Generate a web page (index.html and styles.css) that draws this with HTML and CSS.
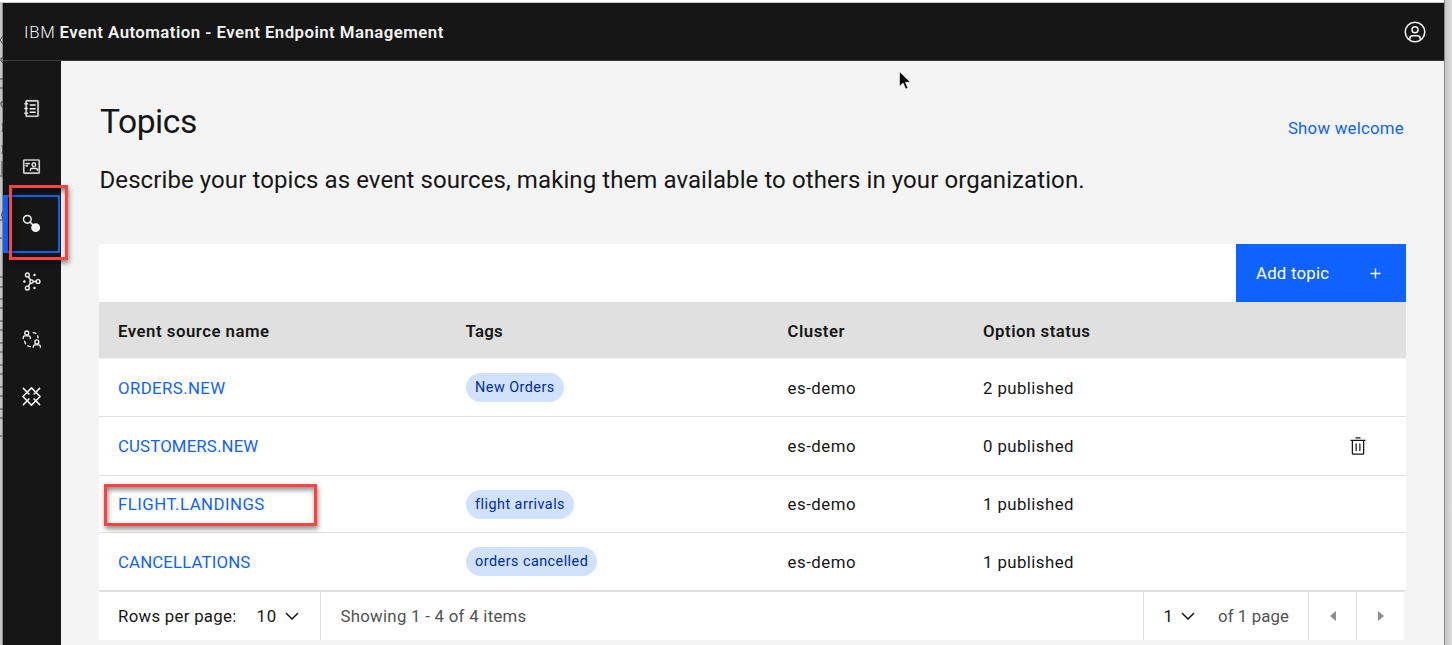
FILE: index.html
```html
<!DOCTYPE html>
<html lang="en">
<head>
<meta charset="utf-8">
<title>Event Endpoint Management</title>
<link rel="stylesheet" href="styles.css">
</head>
<body>
<svg class="edge" viewBox="0 0 3 450" fill="none" stroke="#444" stroke-width="1"><path d="M3 36 0 40l3 4M3 58H1v3l2 2M0 79h3M0 88h3M3 102H1v3l2 3M2 123q2 5 0 9M2 145q2 5 0 9M2 161v14M0 176h3M3 211q-3 4 0 8M0 220h3M0 238h2M0 277h3M0 287h3M0 299h3M0 308h3M0 321h3M0 330h3M0 343h3M0 352h3M0 365h3M0 374h3M0 387h3M0 396h3M0 409h3M0 418h3M0 436h2"/></svg>
<div class="window">
  <header class="header">
    <div class="brand"><span class="brand-prefix">IBM</span> <b class="brand-name">Event Automation - Event Endpoint Management</b></div>
    <svg class="user" viewBox="0 0 32 32" fill="currentColor"><path d="M16 8a5 5 0 1 0 5 5 5 5 0 0 0-5-5Zm0 8a3 3 0 1 1 3-3 3 3 0 0 1-3 3Z"/><path d="M16 2a14 14 0 1 0 14 14A14 14 0 0 0 16 2Zm-6 24.380V25a3 3 0 0 1 3-3h6a3 3 0 0 1 3 3v1.380a11.900 11.900 0 0 1-12 0Zm13.990-1.450A5 5 0 0 0 19 20h-6a5 5 0 0 0-4.990 4.930 12 12 0 1 1 15.980 0Z"/></svg>
  </header>
  <div class="body">
    <nav class="nav">
      <a class="nav-item"><svg class="icon" viewBox="0 0 32 32" fill="currentColor"><path d="M13 9h10v2.500H13zM13 15h10v2.500H13zM13 21h10v2.500H13z"/><path d="M26 2H8a2 2 0 0 0-2 2v3H4v2h2v6H4v2h2v6H4v2h2v3a2 2 0 0 0 2 2h18a2 2 0 0 0 2-2V4a2 2 0 0 0-2-2Zm0 26H8v-3h2v-2H8v-6h2v-2H8V9h2V7H8V4h18Z" stroke="currentColor" stroke-width=".5"/></svg></a>
      <a class="nav-item"><svg class="icon" viewBox="0 0 32 32" fill="currentColor" stroke="currentColor" stroke-width=".4"><path d="M28 4H4a2 2 0 0 0-2 2v20a2 2 0 0 0 2 2h24a2 2 0 0 0 2-2V6a2 2 0 0 0-2-2Zm0 22H4V6h24Z"/><path d="M6 10h7v2H6zM6 14h4v2H6z"/><path d="M20 9a4 4 0 1 0 0 8 4 4 0 0 0 0-8Zm0 6a2 2 0 1 1 0-4 2 2 0 0 1 0 4ZM15 23h-2v-1a4 4 0 0 1 4-4h6a4 4 0 0 1 4 4v1h-2v-1a2 2 0 0 0-2-2h-6a2 2 0 0 0-2 2Z"/></svg></a>
      <a class="nav-item nav-item-active"><svg class="icon" viewBox="0 0 32 32"><circle cx="9" cy="9" r="6.500" fill="none" stroke="currentColor" stroke-width="2.400"/><path d="m13 13 7 7" stroke="currentColor" stroke-width="2.400"/><circle cx="23" cy="23" r="7.500" fill="currentColor"/></svg></a>
      <a class="nav-item"><svg class="icon" viewBox="0 0 32 32" fill="none" stroke="currentColor" stroke-width="2.400"><circle cx="9" cy="5" r="3.200"/><circle cx="9" cy="27" r="3.200"/><circle cx="27" cy="16" r="3.200"/><circle cx="16" cy="16" r="2.800"/><path d="m10.500 8 4.200 5.800M10.500 24l4.200-5.800M19 16h5"/><g fill="currentColor" stroke="none"><circle cx="4" cy="16" r="2"/><circle cx="21" cy="5" r="2"/><circle cx="21" cy="27" r="2"/></g></svg></a>
      <a class="nav-item"><svg class="icon" viewBox="0 0 32 32" fill="none" stroke="currentColor" stroke-width="2.300"><circle cx="8" cy="5" r="3.300"/><path d="M2 15v-2a3 3 0 0 1 3-3h6a3 3 0 0 1 3 3v2"/><circle cx="25" cy="20" r="3.300"/><path d="M19 30v-2a3 3 0 0 1 3-3h6a3 3 0 0 1 3 3v2"/><path d="M18 4.500q4 0 6 2M26 9q1 2 1 5M4.500 18q0 4 2 6M9 26q2 2 6 2"/></svg></a>
      <a class="nav-item"><svg class="icon" viewBox="0 0 32 32" fill="none" stroke="currentColor" stroke-width="2.500"><path d="M16 1.500 30.500 16 16 30.500 1.500 16Z" stroke-linejoin="round"/><path d="m1.500 1.500 11 11M30.500 1.500l-11 11M1.500 30.500l11-11M30.500 30.500l-11-11"/></svg></a>
    </nav>
    <main class="main">
      <div class="title-row"><h1 class="title">Topics</h1><a class="link welcome">Show welcome</a></div>
      <p class="intro">Describe your topics as event sources, making them available to others in your organization.</p>
      <div class="toolbar"><button class="add"><span class="add-label">Add topic</span><svg class="plus" viewBox="0 0 12 12"><path d="M6 .5v11M.5 6h11" stroke="currentColor" stroke-width="1.500"/></svg></button></div>
      <div class="row row-head"><span>Event source name</span><span class="head-tags">Tags</span><span>Cluster</span><span>Option status</span></div>
      <div class="row"><a class="link name-orders">ORDERS.NEW</a><span class="tag">New Orders</span><span class="cluster">es-demo</span><span class="status">2 published</span></div>
      <div class="row row-tall"><a class="link name-customers">CUSTOMERS.NEW</a><span></span><span class="cluster">es-demo</span><span class="status">0 published</span><svg class="trash" viewBox="0 0 32 32" fill="currentColor"><path d="M12 12h2v12h-2zM18 12h2v12h-2zM4 6v2h2v20a2 2 0 0 0 2 2h16a2 2 0 0 0 2-2V8h2V6Zm4 22V8h16v20ZM12 2h8v2h-8z"/></svg></div>
      <div class="row row-short"><a class="link name-flight">FLIGHT.LANDINGS</a><span class="tag">flight arrivals</span><span class="cluster">es-demo</span><span class="status">1 published</span><i class="mark mark-topic"></i></div>
      <div class="row"><a class="link name-cancel">CANCELLATIONS</a><span class="tag">orders cancelled</span><span class="cluster">es-demo</span><span class="status">1 published</span></div>
      <footer class="pager">
        <div class="pager-size"><span class="rpp">Rows per page:</span><span class="ten">10</span><svg class="chevron" viewBox="0 0 14 8"><path d="m1 1 6 6 6-6" fill="none" stroke="currentColor" stroke-width="1.500"/></svg></div>
        <div class="pager-info"><span class="showing">Showing 1 - 4 of 4 items</span></div>
        <div class="pager-page"><span>1</span><svg class="chevron" viewBox="0 0 14 8"><path d="m1 1 6 6 6-6" fill="none" stroke="currentColor" stroke-width="1.500"/></svg><span class="of">of 1 page</span></div>
        <div class="pager-arrow"><svg class="arrow" viewBox="0 0 6 10"><path d="M6 0v10L0 5Z" fill="currentColor"/></svg></div>
        <div class="pager-arrow"><svg class="arrow" viewBox="0 0 6 10"><path d="M0 0v10l6-5Z" fill="currentColor"/></svg></div>
      </footer>
    </main>
  </div>
</div>
<i class="mark mark-nav"></i>
<svg class="cursor" viewBox="0 0 12 19"><path d="M.5.5v15l3.600-3.400 2.600 6 2.300-1-2.600-5.800h5Z" fill="#080808" stroke="#fff" stroke-width=".6"/></svg>
</body>
</html>
```
FILE: styles.css
```css
* { box-sizing: border-box; }
body { margin: 0; width: 1452px; height: 645px; overflow: hidden; padding: 3px 8px 0 3px; background: linear-gradient(#fff 0 2px, #ccc 2px 3px, transparent 3px) 0 0 / 1444px 645px no-repeat, linear-gradient(90deg, #c4c6c4 0 2px, #888 2px 3px, #888 1445px, #c4c4c4 1445px, #dedede 1452px); font: 16.8px/22px Roboto, "Liberation Sans", sans-serif; color: #161616; }
.edge { position: absolute; left: 0; top: 0; width: 3px; height: 450px; }
.window { height: 642px; background: #f4f4f4; }
.header { height: 58px; background: #161616; border-bottom: 1px solid #393939; color: #f4f4f4; display: flex; justify-content: space-between; align-items: center; padding: 0 17px 0 21px; }
.brand-prefix { font-weight: 300; letter-spacing: .7px; }
.brand-name { font-weight: 600; letter-spacing: .46px; }
.user { width: 24px; height: 24px; }
.body { display: flex; height: 584px; }
.nav { width: 58px; background: #161616; color: #f4f4f4; padding-top: 19px; }
.nav-item { height: 57.6px; display: flex; align-items: center; justify-content: center; padding-right: 2px; }
.nav-item-active { margin-right: 1px; border: 2px solid #0f62fe; border-left-width: 5px; padding-right: 4px; }
.icon { width: 19px; height: 19px; }
.main { flex: 1; padding: 0 38px; }
.title-row { display: flex; justify-content: space-between; padding: 40px 2px 0 0; height: 104px; }
.title { margin: 0; font-size: 33.6px; line-height: 42px; font-weight: 400; letter-spacing: -.45px; padding-left: 1px; }
.welcome { margin-top: 16px; letter-spacing: .25px; }
.link { color: #0f62fe; }
.intro { margin: 0; height: 79px; font-size: 24px; line-height: 30px; letter-spacing: .085px; padding-left: .5px; white-space: nowrap; }
.toolbar { height: 58px; background: #fff; display: flex; justify-content: flex-end; }
.add { width: 170px; border: 0; background: #0f62fe; color: #fff; font: inherit; letter-spacing: .22px; display: flex; align-items: center; justify-content: space-between; padding: 0 25px 0 20px; }
.plus { width: 11px; height: 11px; }
.row { height: 58px; background: #fff; border-bottom: 1px solid #e0e0e0; display: grid; grid-template-columns: 347.5px 322px 195.5px 365px 1fr; align-items: center; justify-items: start; padding-left: 19px; position: relative; }
.row-head { height: 57px; padding-top: 1px; background: #e0e0e0; border-bottom-color: #f1f1f1; font-weight: 600; letter-spacing: .5px; }
.head-tags { letter-spacing: .25px; }
.row-tall { height: 59px; }
.row-short { height: 57px; }
.name-orders { letter-spacing: .4px; }
.name-customers { letter-spacing: .15px; }
.name-flight { letter-spacing: .47px; }
.name-cancel { letter-spacing: .15px; }
.cluster { letter-spacing: .55px; }
.status { letter-spacing: .43px; }
.tag { height: 29px; border-radius: 15px; padding: 1px 9.2px 0 9.6px; background: #d0e2ff; color: #002d9c; font-size: 14.4px; line-height: 28px; letter-spacing: .46px; }
.trash { width: 20px; height: 20px; }
.pager { height: 49px; margin-right: 2px; background: #fff; border-top: 1px solid #e0e0e0; display: flex; }
.pager > div { display: flex; align-items: center; }
.pager-size { width: 222px; padding-left: 19px; border-right: 1px solid #e0e0e0; }
.rpp { letter-spacing: .29px; }
.ten { margin-left: 20px; letter-spacing: .8px; }
.chevron { width: 14px; height: 8px; margin-left: 8px; }
.pager-info { flex: 1; padding-left: 19.5px; color: #525252; }
.showing { letter-spacing: .28px; }
.pager-page { width: 165px; border-left: 1px solid #e0e0e0; padding-left: 19.5px; }
.of { margin-left: 23px; color: #525252; letter-spacing: .12px; }
.pager-arrow { width: 48px; border-left: 1px solid #e0e0e0; justify-content: center; color: #8d8d8d; }
.arrow { width: 6px; height: 10px; }
.mark { position: absolute; border: 3px solid #fa4444; box-shadow: 1px 3px 5px rgba(0,0,0,.45), inset 1px 3px 5px rgba(0,0,0,.45); }
.mark-topic { left: 5px; top: 8px; width: 213px; height: 42px; }
.mark-nav { left: 9px; top: 185px; width: 59px; height: 75px; }
.cursor { position: absolute; left: 899px; top: 71px; width: 12px; height: 19px; }
```
